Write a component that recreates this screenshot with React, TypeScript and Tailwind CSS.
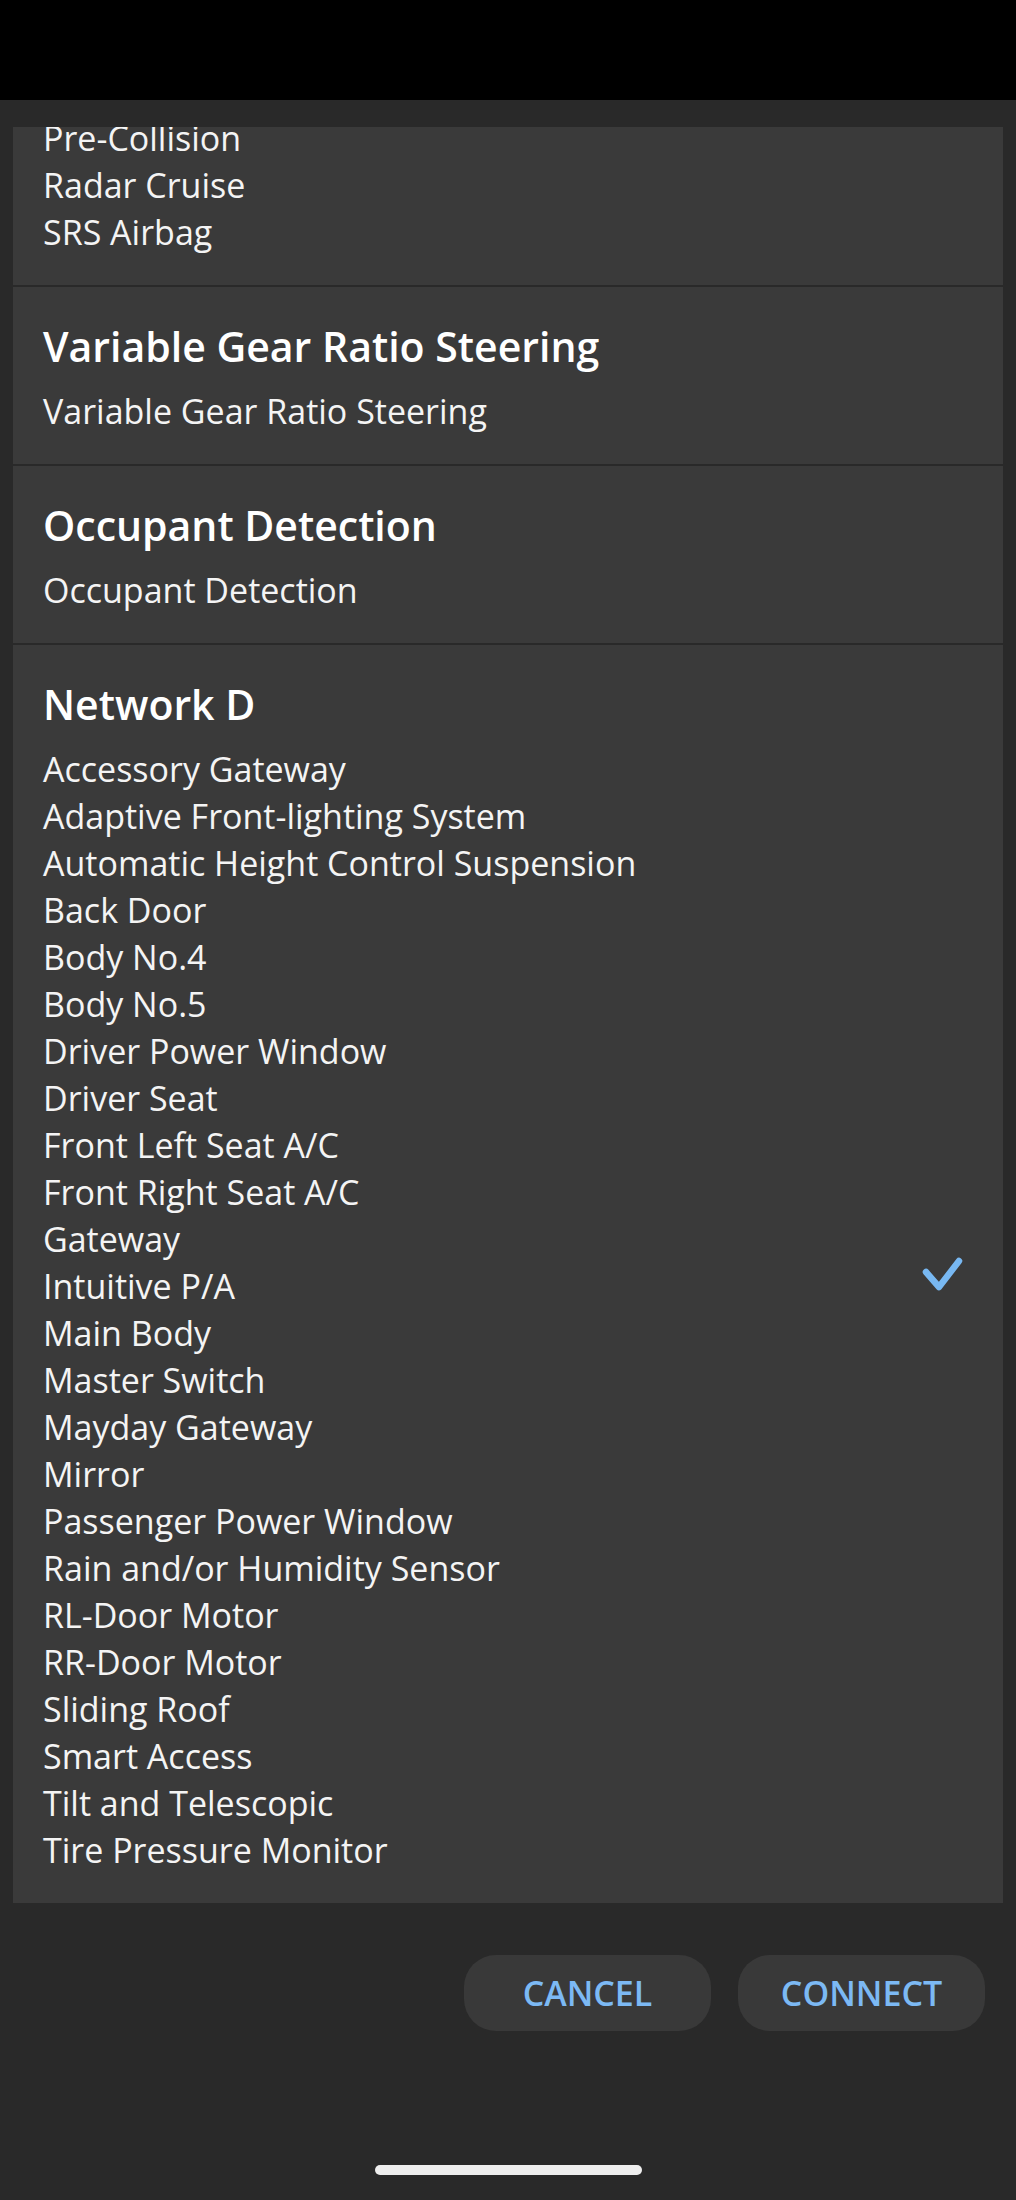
import React from 'react';

interface Section {
  title?: string;
  items: string[];
}

const sections: Section[] = [
  { items: ['Pre-Collision', 'Radar Cruise', 'SRS Airbag'] },
  { title: 'Variable Gear Ratio Steering', items: ['Variable Gear Ratio Steering'] },
  { title: 'Occupant Detection', items: ['Occupant Detection'] },
  {
    title: 'Network D',
    items: [
      'Accessory Gateway',
      'Adaptive Front-lighting System',
      'Automatic Height Control Suspension',
      'Back Door',
      'Body No.4',
      'Body No.5',
      'Driver Power Window',
      'Driver Seat',
      'Front Left Seat A/C',
      'Front Right Seat A/C',
      'Gateway',
      'Intuitive P/A',
      'Main Body',
      'Master Switch',
      'Mayday Gateway',
      'Mirror',
      'Passenger Power Window',
      'Rain and/or Humidity Sensor',
      'RL-Door Motor',
      'RR-Door Motor',
      'Sliding Roof',
      'Smart Access',
      'Tilt and Telescopic',
      'Tire Pressure Monitor',
    ],
  },
];

const selected = 'Intuitive P/A';

function Check() {
  return (
    <svg width="44" height="36" viewBox="0 0 44 36" className="shrink-0 -mt-[7px] mr-[10px]">
      <path
        d="M5 16 L18 31 L38 5"
        fill="none"
        stroke="#78b8f2"
        strokeWidth="6.5"
        strokeLinecap="round"
        strokeLinejoin="round"
      />
    </svg>
  );
}

export default function App() {
  return (
    <div
      className="w-[1016px] h-[2200px] bg-[#292929] flex flex-col overflow-hidden"
      style={{ fontFamily: '"Open Sans", "Noto Sans", sans-serif' }}
    >
      {/* Status bar */}
      <div className="h-[100px] bg-black shrink-0" />

      {/* Scrolling list of ECU groups */}
      <div className="mt-[27px] mx-[13px] h-[1776px] overflow-hidden shrink-0">
        <div className="flex flex-col gap-[2px] -mt-[12px]">
          {sections.map((section, idx) => (
            <div
              key={idx}
              className={
                'bg-[#3a3a3a] pl-[30px] pr-[28px] pb-[29px] ' +
                (section.title ? 'pt-[31px]' : 'pt-0')
              }
            >
              {section.title && (
                <h3 className="text-[41px] leading-[56px] font-semibold text-white mb-[14px]">
                  {section.title}
                </h3>
              )}
              <ul>
                {section.items.map((item) => (
                  <li
                    key={item}
                    className="h-[47px] flex items-start justify-between text-[34px] leading-[47px] text-[#f4f4f4]"
                  >
                    <span>{item}</span>
                    {section.title === 'Network D' && item === selected && <Check />}
                  </li>
                ))}
              </ul>
            </div>
          ))}
        </div>
      </div>

      {/* Dialog actions */}
      <div className="mt-[52px] flex justify-end gap-[27px] pr-[31px]">
        <button className="w-[247px] h-[76px] rounded-[32px] bg-[#393939] text-[#7cb9f4] text-[34px] font-semibold">
          CANCEL
        </button>
        <button className="w-[247px] h-[76px] rounded-[32px] bg-[#393939] text-[#7cb9f4] text-[34px] font-semibold">
          CONNECT
        </button>
      </div>

      {/* Home indicator */}
      <div className="mt-[134px] mx-auto w-[267px] h-[10px] rounded-full bg-[#eeeeee]" />
    </div>
  );
}
